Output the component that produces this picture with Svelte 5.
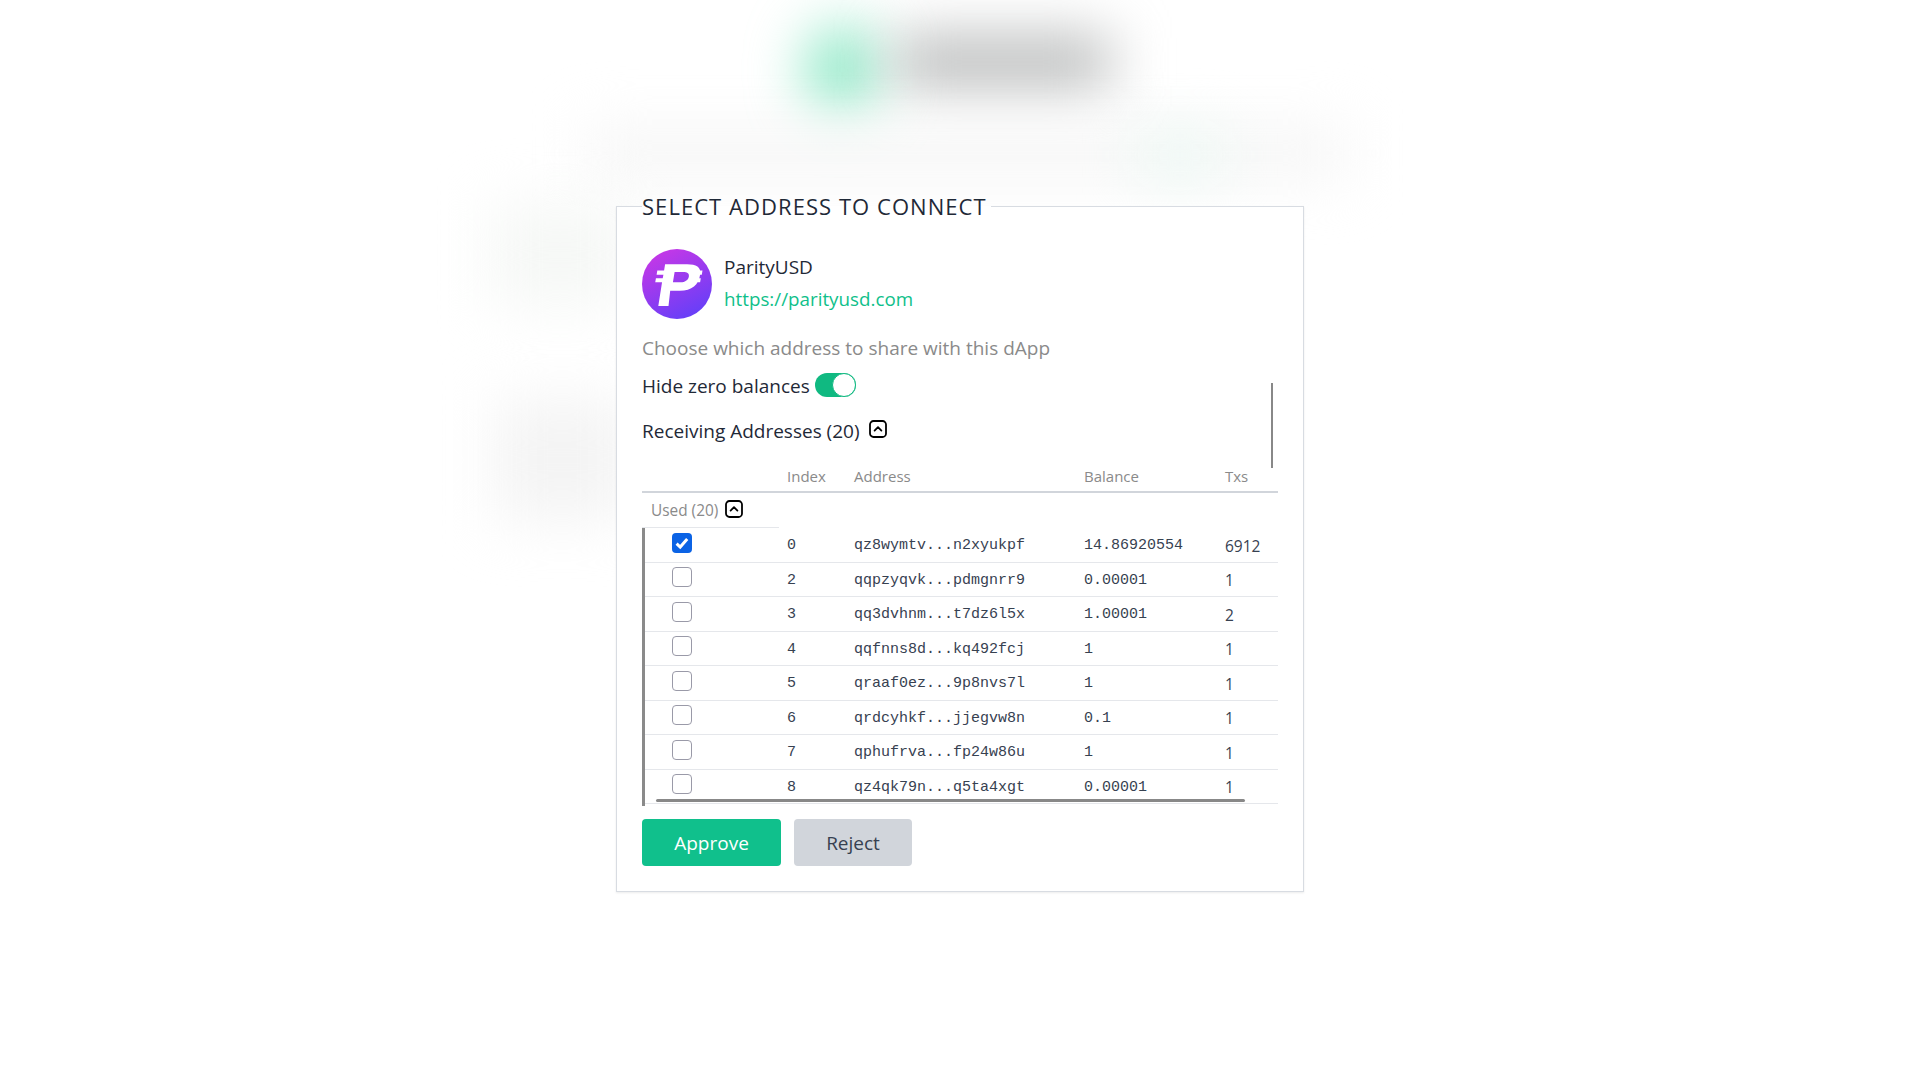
<script>
  const rows = [
    { checked: true, index: 0, address: "qz8wymtv...n2xyukpf", balance: "14.86920554", txs: 6912 },
    { index: 2, address: "qqpzyqvk...pdmgnrr9", balance: "0.00001", txs: 1 },
    { index: 3, address: "qq3dvhnm...t7dz6l5x", balance: "1.00001", txs: 2 },
    { index: 4, address: "qqfnns8d...kq492fcj", balance: "1", txs: 1 },
    { index: 5, address: "qraaf0ez...9p8nvs7l", balance: "1", txs: 1 },
    { index: 6, address: "qrdcyhkf...jjegvw8n", balance: "0.1", txs: 1 },
    { index: 7, address: "qphufrva...fp24w86u", balance: "1", txs: 1 },
    { index: 8, address: "qz4qk79n...q5ta4xgt", balance: "0.00001", txs: 1 },
  ];
</script>

{#snippet caret()}
  <svg class="caret" viewBox="0 0 18 18" width="18" height="18" fill="none" stroke="#000">
    <rect x="1" y="1" width="16" height="16" rx="3.5" stroke-width="1.8" />
    <path d="M5.6 10.6 9 7.2l3.4 3.4" stroke-width="1.8" stroke-linecap="round" stroke-linejoin="round" />
  </svg>
{/snippet}

<div class="page">
  <!-- blurred dashboard behind the dialog -->
  <div class="backdrop" aria-hidden="true">
    <div class="blob green"></div>
    <div class="blob grey"></div>
    <div class="blob nav"></div>
    <div class="blob nav-green"></div>
    <div class="blob side-a"></div>
    <div class="blob side-b"></div>
  </div>

  <fieldset class="dialog">
    <legend>Select address to connect</legend>

    <div class="site">
      <svg class="logo" viewBox="0 0 206 206" width="70" height="70">
        <defs>
          <linearGradient id="pusd" x1="0.2" y1="0" x2="0.7" y2="1">
            <stop offset="0" stop-color="#c937e6" />
            <stop offset="1" stop-color="#653ff8" />
          </linearGradient>
        </defs>
        <circle cx="103" cy="103" r="103" fill="url(#pusd)" />
        <path
          fill="#fff"
          fill-rule="evenodd"
          d="M68 45h65c26 0 42 8 38 30-4 30-24 48-60 48H83l-5 45H48L59 98H39l2-12h20l2-10H43l2-13h20zM96 68l-5 30h22c15 0 24-8 25-18 1-9-6-12-16-12z"
        />
        <path fill="#fff" d="M168 63h10l-2 13h-10zM160 86h13l-2 12h-16z" />
      </svg>
      <div class="site-text">
        <div class="site-name">ParityUSD</div>
        <a class="site-url" href="https://parityusd.com">https://parityusd.com</a>
      </div>
    </div>

    <p class="hint">Choose which address to share with this dApp</p>

    <div class="scroller">
      <div class="toggle-row">
        <span>Hide zero balances</span>
        <span class="toggle"><span class="knob"></span></span>
      </div>

      <div class="section-title">
        <span>Receiving Addresses (20)</span>
        {@render caret()}
      </div>

      <div class="table">
        <div class="row head">
          <span></span>
          <span>Index</span>
          <span>Address</span>
          <span>Balance</span>
          <span>Txs</span>
        </div>
        <div class="group">
          <span>Used (20)</span>
          {@render caret()}
        </div>
        <div class="rows">
          {#each rows as r}
            <div class="row item">
              <span class="cell-check">
                <span class="check" class:on={r.checked}>
                  {#if r.checked}
                    <svg viewBox="0 0 20 20" width="20" height="20" fill="none" stroke="#fff" stroke-width="3">
                      <path d="M4.6 10.6 8.2 14l7-8" />
                    </svg>
                  {/if}
                </span>
              </span>
              <span class="mono">{r.index}</span>
              <span class="mono">{r.address}</span>
              <span class="mono">{r.balance}</span>
              <span class="txs">{r.txs}</span>
            </div>
          {/each}
          <div class="hbar"></div>
        </div>
      </div>
      <div class="vbar"></div>
    </div>

    <div class="actions">
      <button class="approve">Approve</button>
      <button class="reject">Reject</button>
    </div>
  </fieldset>
</div>

<style>
  :global(body) {
    margin: 0;
    background: #fff;
    font-family: "Open Sans", "Noto Sans", sans-serif;
    color: #1f2937;
  }
  .page {
    position: relative;
    height: 1080px;
    overflow: hidden;
    padding-top: 192px;
    box-sizing: border-box;
  }
  .backdrop {
    position: absolute;
    inset: 0;
  }
  .blob {
    position: absolute;
    filter: blur(28px);
  }
  .green { left: 805px; top: 25px; width: 75px; height: 90px; border-radius: 50%; background: #8ee8c6; }
  .grey { left: 895px; top: 36px; width: 215px; height: 52px; background: #b8baba; }
  .nav { left: 585px; top: 128px; width: 765px; height: 50px; background: #f6f6f6; }
  .nav-green { left: 1135px; top: 135px; width: 90px; height: 40px; background: #ecf9f4; }
  .side-a { left: 490px; top: 205px; width: 140px; height: 100px; background: #f6f8f6; }
  .side-b { left: 495px; top: 400px; width: 135px; height: 120px; background: #f4f4f4; }

  .dialog {
    position: relative;
    width: 688px;
    height: 700px;
    box-sizing: border-box;
    margin: 0 auto;
    padding: 16px 25px 0;
    background: #fff;
    border: 1px solid #d8dce2;
    box-shadow: 0 1px 2px rgba(0, 0, 0, 0.08);
  }
  legend {
    padding: 0 4px 0 0;
    font-size: 22px;
    line-height: 28px;
    letter-spacing: 1.05px;
    text-transform: uppercase;
    color: #1f2937;
  }
  .site {
    display: flex;
    gap: 12px;
    margin-top: 13px;
  }
  .logo {
    flex: none;
  }
  .site-text {
    padding-top: 2px;
  }
  .site-name {
    font-size: 19px;
    line-height: 32px;
  }
  .site-url {
    display: block;
    font-size: 18.8px;
    line-height: 32px;
    color: #10bf8a;
    text-decoration: none;
  }
  .hint {
    margin: 15px 0 0;
    font-size: 19px;
    line-height: 28px;
    color: #8a8a8a;
  }
  .scroller {
    position: relative;
  }
  .toggle-row {
    display: flex;
    align-items: center;
    gap: 5px;
    margin-top: 10px;
    height: 28px;
    font-size: 19px;
  }
  .toggle {
    display: block;
    width: 41px;
    height: 24px;
    margin-top: -3px;
    border-radius: 12px;
    background: #10b981;
    position: relative;
  }
  .knob {
    position: absolute;
    right: 0;
    top: 0;
    width: 24px;
    height: 24px;
    box-sizing: border-box;
    border-radius: 50%;
    background: #fff;
    border: 1.5px solid #10b981;
  }
  .section-title {
    display: flex;
    align-items: center;
    gap: 9px;
    margin-top: 17px;
    height: 28px;
    font-size: 19px;
  }
  .section-title .caret {
    margin-top: -5px;
  }
  .table {
    margin-top: 17px;
    width: 636px;
    font-size: 15px;
  }
  .row {
    display: grid;
    grid-template-columns: 145px 67px 230px 141px 1fr;
    align-items: center;
  }
  .head {
    height: 31px;
    padding-bottom: 2px;
    box-sizing: border-box;
    color: #8a8a8a;
    border-bottom: 2px solid #d1d5db;
  }
  .group {
    display: flex;
    align-items: center;
    gap: 7px;
    width: 137px;
    height: 35px;
    box-sizing: border-box;
    padding: 1px 0 0 9px;
    font-size: 15.4px;
    color: #8a8a8a;
    border-bottom: 1px solid #e5e7eb;
  }
  .group .caret {
    margin-top: -3px;
  }
  .rows {
    position: relative;
    border-left: 3px solid #8a8a8a;
    padding-bottom: 2px;
  }
  .item {
    grid-template-columns: 142px 67px 230px 141px 1fr;
    height: 34.5px;
    box-sizing: border-box;
    border-bottom: 1px solid #e5e7eb;
    color: #374151;
  }
  .cell-check {
    display: flex;
    padding-left: 27px;
    margin-top: -4px;
  }
  .check {
    display: block;
    width: 20px;
    height: 20px;
    box-sizing: border-box;
    border: 1px solid #9a9aa8;
    border-radius: 4px;
    background: #fff;
  }
  .check.on {
    background: #0b63e5;
    border: none;
  }
  .check svg {
    display: block;
  }
  .mono {
    font-family: "Liberation Mono", "DejaVu Sans Mono", monospace;
    font-size: 15px;
    padding-top: 2px;
  }
  .txs {
    font-size: 15.5px;
    padding-top: 2px;
  }
  .hbar {
    position: absolute;
    left: 11px;
    top: 271px;
    width: 589px;
    height: 3px;
    border-radius: 2px;
    background: #888;
  }
  .vbar {
    position: absolute;
    right: 5px;
    top: 11px;
    width: 2px;
    height: 85px;
    background: #888;
  }
  .actions {
    display: flex;
    gap: 13px;
    margin-top: 13px;
  }
  button {
    height: 47px;
    border: none;
    border-radius: 4px;
    font: inherit;
    font-size: 19px;
  }
  .approve {
    width: 139px;
    background: #10c08c;
    color: #fff;
  }
  .reject {
    width: 118px;
    background: #d1d5db;
    color: #374151;
  }
</style>
